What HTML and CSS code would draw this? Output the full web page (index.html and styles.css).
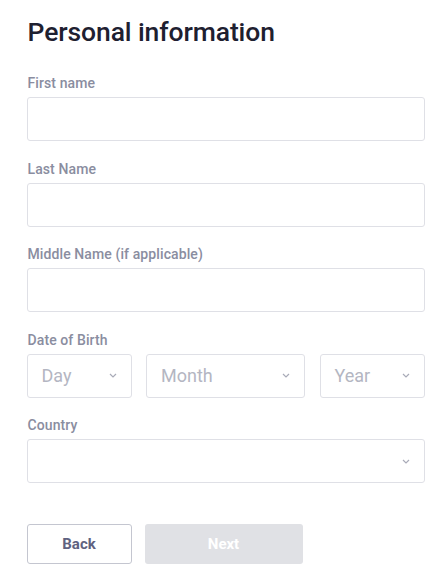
FILE: index.html
```html
<!DOCTYPE html>
<html>
<head>
<meta charset="utf-8">
<link rel="stylesheet" href="styles.css">
</head>
<body>
<main class="form">
  <h1 class="title">Personal information</h1>
  <div class="field">
    <label class="label">First name</label>
    <div class="input"></div>
  </div>
  <div class="field">
    <label class="label">Last Name</label>
    <div class="input"></div>
  </div>
  <div class="field">
    <label class="label">Middle Name (if applicable)</label>
    <div class="input"></div>
  </div>
  <div class="field">
    <label class="label">Date of Birth</label>
    <div class="dob">
      <div class="select"><span class="ph">Day</span><svg class="chev" viewBox="0 0 8 5"><path d="M1 1l3 3 3-3"/></svg></div>
      <div class="select"><span class="ph">Month</span><svg class="chev" viewBox="0 0 8 5"><path d="M1 1l3 3 3-3"/></svg></div>
      <div class="select"><span class="ph">Year</span><svg class="chev" viewBox="0 0 8 5"><path d="M1 1l3 3 3-3"/></svg></div>
    </div>
  </div>
  <div class="field">
    <label class="label">Country</label>
    <div class="select wide"><span class="ph"></span><svg class="chev" viewBox="0 0 8 5"><path d="M1 1l3 3 3-3"/></svg></div>
  </div>
  <div class="actions">
    <button class="btn back">Back</button>
    <button class="btn next">Next</button>
  </div>
</main>
</body>
</html>
```
FILE: styles.css
```css
* { box-sizing: border-box; }
body {
  margin: 0;
  background: #fff;
  font-family: Roboto, "Liberation Sans", sans-serif;
}
.form {
  width: 398px;
  margin-left: 26.5px;
  padding-top: 16px;
  display: flex;
  flex-direction: column;
}
.title {
  margin: 0 0 27px 1px;
  font-size: 26.5px;
  font-weight: 500;
  color: #1e2030;
  line-height: 32px;
  letter-spacing: -0.1px;
}
.field {
  display: flex;
  flex-direction: column;
  margin-bottom: 19.5px;
}
.label {
  font-size: 14px;
  font-weight: 500;
  color: #8a8da0;
  line-height: 16px;
  margin: 0 0 6px 1px;
  letter-spacing: 0.1px;
}
.input, .select {
  height: 44px;
  border: 1px solid #dfe0e6;
  border-radius: 3px;
  background: #fff;
}
.dob {
  display: grid;
  grid-template-columns: 105px 159px 105px;
  justify-content: space-between;
}
.select {
  display: flex;
  align-items: center;
  justify-content: space-between;
  padding: 0 14px 0 14px;
}
.ph {
  font-size: 18px;
  color: #b4b6c2;
}
.chev {
  width: 8px;
  height: 5px;
  fill: none;
  stroke: #a9abb8;
  stroke-width: 1.2;
}
.actions {
  display: flex;
  gap: 13px;
  margin-top: 21.5px;
}
.btn {
  height: 40px;
  border-radius: 3px;
  font-family: Roboto, "Liberation Sans", sans-serif;
  font-size: 15px;
  font-weight: 700;
}
.back {
  width: 105px;
  border: 1.5px solid #c4c6d0;
  background: #fff;
  color: #5f6280;
}
.next {
  width: 158px;
  border: none;
  background: #e0e1e5;
  color: #fff;
}
```
